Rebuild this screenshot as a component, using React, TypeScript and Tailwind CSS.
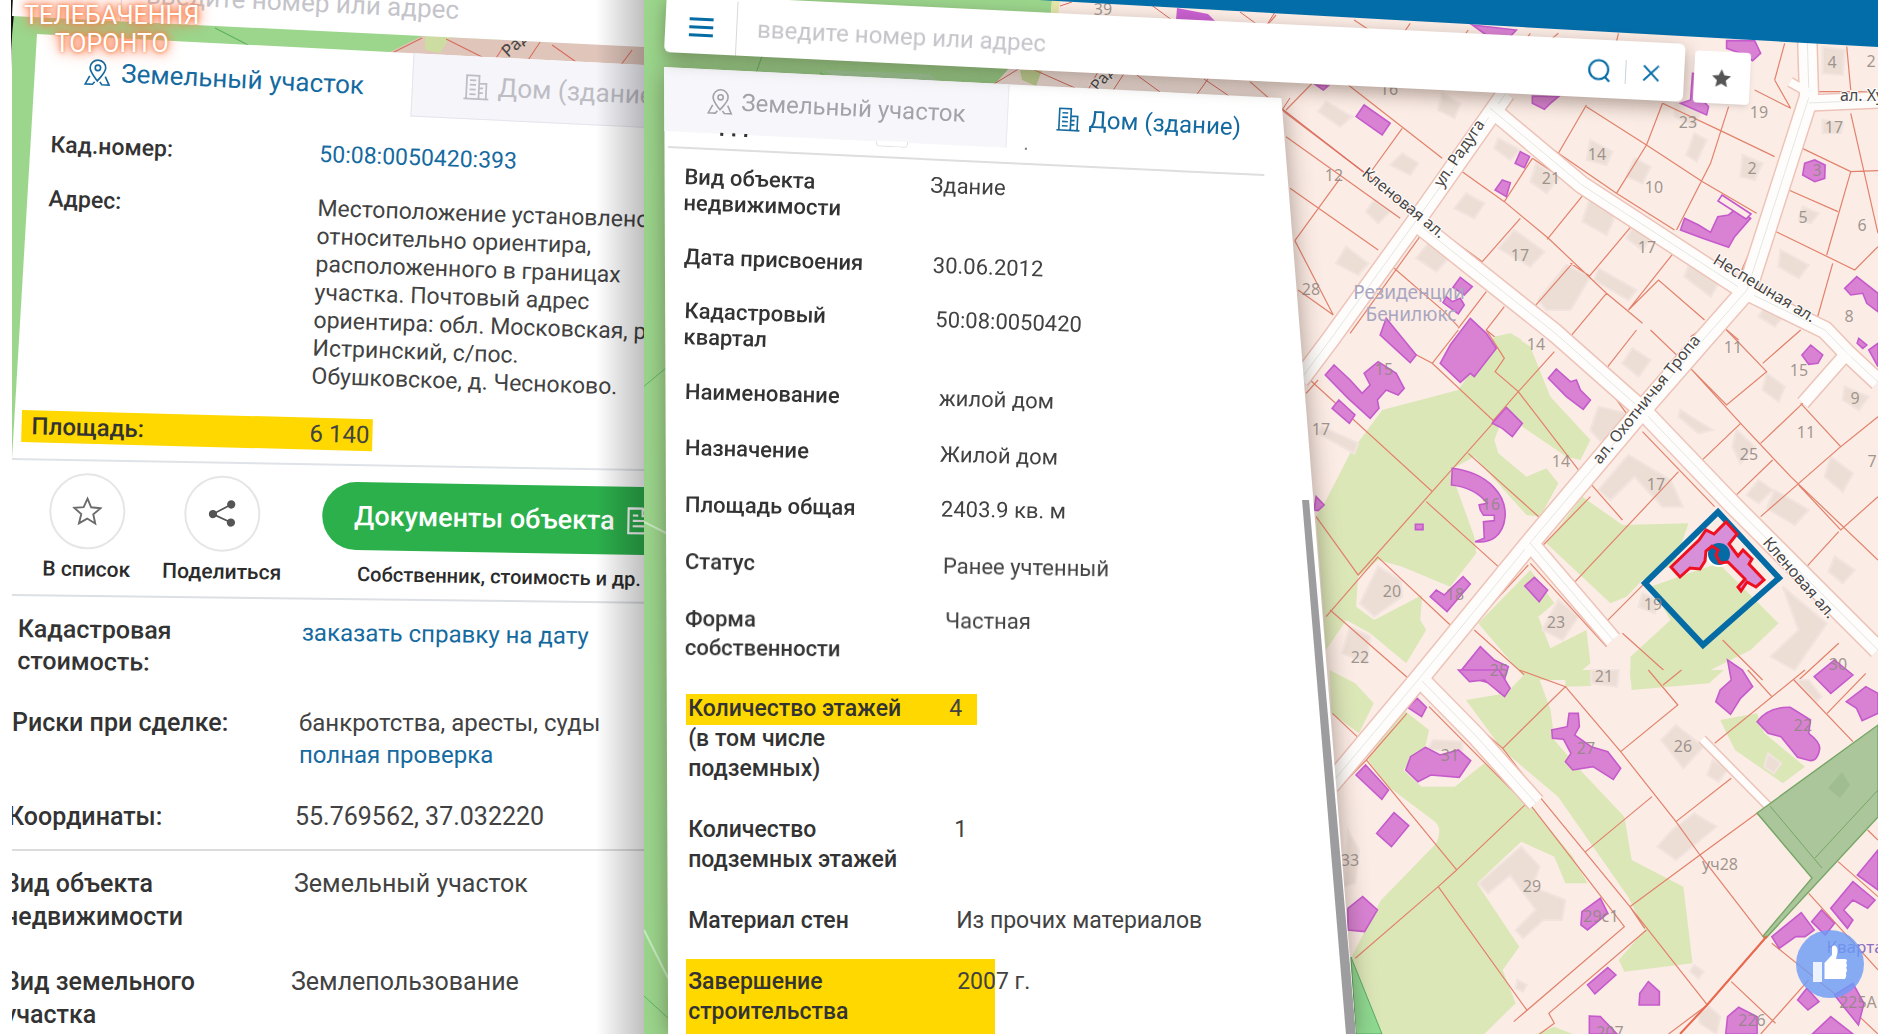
import type { ReactNode } from 'react';

type Label = { x: number; y: number; text: string; rotate?: number };

const ROADS = [
  { d: 'M1506 93L1426 207L1330 340L1300 380', w: 17 },
  { d: 'M1422 227L1555 333L1642 410L1731 503L1878 650', w: 17 },
  { d: 'M1490 108L1582 185L1743 290L1825 330L1847 353L1878 382', w: 16 },
  { d: 'M1807 30L1809 97L1747 290L1703 340L1642 410L1530 543L1418 680L1330 785', w: 18 },
  { d: 'M1809 103L1878 100', w: 15 },
  { d: 'M1790 82L1815 96', w: 8 },
  { d: 'M1530 543L1613 640', w: 16 },
  { d: 'M1847 353L1803 403', w: 12 },
  { d: 'M1422 681L1477 737L1536 803', w: 17 },
  { d: 'M1702 739L1768 806', w: 7 },
];

const LABELS: Label[] = [
  { x: 1103, y: 15, text: '39' },
  { x: 1334, y: 181, text: '12' },
  { x: 1389, y: 95, text: '16' },
  { x: 1311, y: 295, text: '28' },
  { x: 1520, y: 261, text: '17' },
  { x: 1551, y: 184, text: '21' },
  { x: 1597, y: 160, text: '14' },
  { x: 1654, y: 193, text: '10' },
  { x: 1647, y: 253, text: '17' },
  { x: 1688, y: 128, text: '23' },
  { x: 1759, y: 118, text: '19' },
  { x: 1752, y: 174, text: '2' },
  { x: 1832, y: 68, text: '4' },
  { x: 1871, y: 67, text: '2' },
  { x: 1834, y: 133, text: '17' },
  { x: 1817, y: 176, text: '3' },
  { x: 1803, y: 223, text: '5' },
  { x: 1862, y: 231, text: '6' },
  { x: 1849, y: 322, text: '8' },
  { x: 1536, y: 350, text: '14' },
  { x: 1733, y: 353, text: '11' },
  { x: 1384, y: 375, text: '15' },
  { x: 1799, y: 376, text: '15' },
  { x: 1855, y: 404, text: '9' },
  { x: 1321, y: 435, text: '17' },
  { x: 1806, y: 438, text: '11' },
  { x: 1749, y: 460, text: '25' },
  { x: 1561, y: 467, text: '14' },
  { x: 1872, y: 467, text: '7' },
  { x: 1656, y: 490, text: '17' },
  { x: 1491, y: 510, text: '16' },
  { x: 1392, y: 597, text: '20' },
  { x: 1455, y: 600, text: '18' },
  { x: 1653, y: 610, text: '19' },
  { x: 1556, y: 628, text: '23' },
  { x: 1360, y: 663, text: '22' },
  { x: 1499, y: 676, text: '25' },
  { x: 1604, y: 682, text: '21' },
  { x: 1838, y: 670, text: '30' },
  { x: 1803, y: 731, text: '22' },
  { x: 1683, y: 752, text: '26' },
  { x: 1586, y: 754, text: '27' },
  { x: 1450, y: 761, text: '31' },
  { x: 1350, y: 866, text: '33' },
  { x: 1720, y: 870, text: 'уч28' },
  { x: 1532, y: 892, text: '29' },
  { x: 1601, y: 922, text: '29с1' },
  { x: 1752, y: 1026, text: '226' },
  { x: 1858, y: 1008, text: '225А' },
  { x: 1610, y: 1038, text: '207' },
];

const STREETS: Label[] = [
  { x: 1442, y: 188, text: 'ул. Радуга', rotate: -56 },
  { x: 1361, y: 175, text: 'Кленовая ал.', rotate: 39 },
  { x: 1712, y: 263, text: 'Неспешная ал.', rotate: 31 },
  { x: 1600, y: 465, text: 'ал. Охотничья Тропа', rotate: -51 },
  { x: 1762, y: 543, text: 'Кленовая ал.', rotate: 49 },
  { x: 1840, y: 101, text: 'ал. Ху', rotate: 0 },
  { x: 1098, y: 92, text: 'Радуга', rotate: -50 },
];

const NORTH_LINES =
  'M0 245L90 340L420 640M90 410L230 530L375 655M100 565L320 750M112 722L208 945M112 722L225 535M120 870L208 945M155 250L90 330M240 250L480 475M380 385L305 510M360 805L485 935L520 980M450 635L600 380M530 515L635 605L745 715L890 880L980 970M635 605L705 475M705 475L835 580L955 675L1205 860M835 580L742 718M955 675L848 828L800 790M675 655L580 785M805 790L712 918M890 880L800 1010M580 785L425 650M600 320L770 460L915 580L1060 690M840 315L770 460M840 320L990 435L1130 545L1265 640M990 435L915 580M1030 310L990 435M1030 310L1180 395L1310 470M1195 320L1150 490L1065 690M1350 325L1260 270M1310 240L1350 325M1335 130L1310 240M1370 440L1500 515L1568 512M1500 515L1440 765M1335 565L1468 635M1305 690L1510 810L1568 740M1455 790L1415 960M1500 340L1568 700M1395 345L1210 860M1390 135L1405 275L1568 275M1490 140L1500 270M1060 755L945 930L1020 840L1135 960M1245 890L1100 1010M1185 985L1220 1020M590 875L520 985M635 920L590 990L620 1020M430 700L250 1000M260 60L310 100M400 70L380 105M545 90L530 115M700 100L685 125M770 100L745 125M920 100L912 140M65 45L40 80M420 700L800 1015';
const MIDDLE_LINES =
  'M150 150L455 485L270 735L165 560M170 150L140 190M345 30L455 100L610 275L455 485M455 100L520 0M590 0L635 85L612 125L670 185L605 275M760 65L670 185L820 420L930 570M545 370L725 565M440 515L620 710M318 680L500 885M190 860L320 680M200 840L400 1050M800 20L940 250M890 115L965 0M1000 0L1100 115L1225 280L1350 440L1568 690M1225 280L1125 395M1100 115L1190 225L1290 125L1190 0M1280 100L1375 0M1375 220L1475 350L1568 260M1475 350L1275 560M1275 340L1380 220M1305 390L1210 500M1370 465L1475 600L1568 500M1470 605L1390 710M980 305L1160 530M1070 425L800 770M720 660L850 500M700 700L890 950M695 705L560 880M560 900L690 1040M930 910L1060 1050M890 875L985 760M1180 930L1280 1050M1470 940L1370 1050M1550 945L1568 930';
const SOUTH_LINES =
  'M88 130L155 200M350 40L550 235L720 50L595 0M550 235L650 380L895 710L1105 1005M720 50L870 245L1020 455L1085 555L1260 805M870 245L1025 105L945 0M985 45L1035 0M1125 220L1370 0M1215 0L1280 80M1340 30L1500 215M1430 130L1535 10M1170 325L1020 455M1085 555L895 710M1240 430L1085 555M775 545L955 380M180 270L425 600L615 400L570 355L350 110M375 650L615 1020M150 865L375 650L425 600M625 405L880 770L580 1055M940 780L675 1030L690 1060L650 1092M935 775L895 710M180 270L290 130M100 360L180 270M1105 1005L1420 605L1568 430M1000 1092L1105 1005M1460 575L1568 680M1380 670L1568 900M1280 820L1460 980L1568 1092M1170 935L1290 1060M1380 930L1250 1092M1540 480L1568 510';

const NORTH_BUILDINGS =
  'M285 315L350 370L330 405L265 350ZM675 455L698 470L685 503L662 490ZM630 540L650 548L640 590L612 570ZM1085 655L1120 675L1150 697L1168 650L1195 645L1215 625L1250 655L1210 710L1195 742L1130 715L1075 690ZM1385 490L1410 480L1436 495L1435 535L1410 545L1380 525ZM1515 830L1568 880L1568 935L1540 910L1530 880L1500 885L1485 865ZM705 288L770 290L750 310L735 328L705 310ZM1105 220L1125 225L1122 290L1145 320L1140 345L1075 310L1100 300ZM555 75L665 90L640 122L590 105ZM1190 122L1260 122L1275 160L1255 182L1225 160L1190 145ZM525 832L555 860L535 885L507 862ZM490 890L505 905L525 895L535 915L520 942L482 908ZM165 255L195 258L183 270Z';
const MIDDLE_BUILDINGS =
  'M210 105L250 150L280 190L300 165L285 130L320 95L365 130L385 175L370 195L340 180L318 210L322 235L300 265L245 205L188 135ZM222 210L262 255L248 280L205 235ZM340 -35L415 75L400 98L325 15ZM550 -35L590 10L615 55L560 140L550 130L525 157L475 100L500 45ZM765 117L800 155L815 150L825 180L850 210L832 238L790 200L745 145ZM640 232L680 280L655 320L630 295L605 280ZM505 415C600 430 640 500 637 560C632 620 600 640 562 635L585 625L583 575L610 572L610 556L583 556L575 540L572 525L592 520C570 485 540 470 503 465ZM165 500L185 525L170 542L160 540ZM413 583H432V599H413ZM532 740L550 762L492 845L450 800L465 780L485 795ZM710 742L743 780L722 815L686 768ZM1400 45L1430 75L1418 100L1395 103L1378 75ZM1545 60L1568 40V110ZM575 950L610 990L645 1010L635 1050L625 1090L600 1060L555 1045L525 1025ZM1520 25L1540 45L1530 55L1516 40Z';
const SOUTH_BUILDINGS =
  'M430 0L540 0L570 55L555 80L500 30L460 35ZM318 85L343 112L330 140L292 112ZM340 232L380 255L430 240L463 272L432 322L355 315L320 335L287 300L300 260ZM178 285L240 360L222 388L152 315ZM255 428L295 467L248 530L208 490ZM170 680L210 720L175 785L130 780L130 715ZM730 130L755 130L758 170L745 195L790 230L835 245L870 295L850 328L795 290L740 300L720 275L735 250L715 208L685 205L683 180L725 170ZM1160 -30L1200 0L1228 50L1195 85L1168 133L1128 95L1140 60L1170 30ZM1450 -30L1500 15L1440 70L1395 20ZM1535 50L1568 70L1568 130L1525 152L1510 115L1482 95ZM1240 155Q1270 110 1330 112L1385 150L1380 190Q1410 215 1410 235Q1405 272 1385 272L1350 262L1305 200L1270 190ZM1568 540L1568 660L1512 615ZM1500 635L1560 690L1540 715L1500 690L1475 720L1500 750L1485 775L1440 715ZM1360 728L1395 780L1370 800L1345 800L1300 835L1280 800ZM1415 720L1450 760L1425 795L1388 755ZM815 685L835 730L780 780L762 765L765 725ZM835 893L857 915L800 972L780 945ZM945 935L975 965L975 1005L920 1005L922 970ZM785 1038L815 1040L860 1092L785 1092ZM1190 1012L1240 1040L1240 1092L1155 1092L1160 1040ZM1375 955L1408 995L1378 1020L1350 990ZM1450 975L1500 940L1530 1000L1515 1065L1475 1010ZM1440 1040L1500 1092L1390 1092Z';

const NORTH_HOUSES =
  'M190 305L255 350L225 380L170 335ZM480 280L525 310L510 355L470 330ZM380 460L420 490L400 525L350 495ZM620 415L675 450L650 480L610 445ZM540 580L585 610L560 655L510 625ZM310 600L350 635L320 670L290 635ZM240 740L295 790L270 825L215 790ZM445 730L500 770L465 815L415 775ZM660 690L735 755L700 800L620 745ZM715 490L770 535L740 580L700 545ZM850 590L915 640L890 705L830 665ZM790 795L850 830L800 930L740 930L720 900ZM960 475L1000 500L980 550L940 530ZM850 420L905 455L890 495L840 480ZM970 650L1010 700L980 750L940 715ZM1060 300L1130 330L1110 380L1060 350ZM1110 400L1140 420L1115 485L1090 465ZM1230 465L1280 490L1260 540L1225 530ZM1430 140L1485 150L1480 225L1430 220ZM1430 360L1480 370L1475 400L1430 400ZM1380 620L1420 640L1400 670L1370 660ZM1325 750L1395 795L1370 835L1320 800ZM1290 910L1340 940L1310 980L1270 950ZM1100 780L1180 830L1150 890L1085 830ZM870 805L965 870L945 900L860 840Z';
const MIDDLE_HOUSES =
  'M955 55L1000 90L970 140L930 100ZM870 230L940 250L880 340L850 300ZM945 375L1050 450L1080 530L1030 530L960 440L900 510L870 480ZM1075 240L1155 300L1120 310L1070 260ZM1290 130L1335 170L1320 215L1280 180ZM1450 380L1505 430L1480 485L1435 440ZM1215 300L1260 350L1225 400L1205 350ZM1310 480L1395 540L1360 585L1290 535ZM1270 450L1305 480L1270 520L1240 495ZM1330 770L1440 880L1360 1020L1300 980L1370 900ZM1460 680L1510 720L1480 760L1445 725ZM770 810L820 860L780 930L730 900ZM320 710L375 750L380 800L310 860L275 820ZM250 890L300 920L290 1000L230 970ZM180 290L270 340L260 370L170 310ZM1485 170L1545 200L1520 240L1480 210ZM980 790L1020 810L1010 850L970 830Z';
const SOUTH_HOUSES =
  'M600 530L650 590L630 650L720 690L710 750L660 750L605 805L585 780L640 720L570 615L510 670L485 640ZM1020 165L1095 230L1040 295L980 210ZM1070 430L1130 470L1020 570L970 530L1010 480ZM130 480L160 540L150 640L120 650ZM360 210L440 215L440 240L345 240ZM790 0H865L860 50L790 40ZM1120 270L1160 300L1135 335L1105 315ZM1080 1030L1110 1010L1140 1040L1130 1092L1085 1060ZM590 930L615 945L605 965L585 955ZM1070 885L1095 905L1080 925L1058 905ZM1345 30L1380 30L1415 80L1400 95ZM1270 250L1305 280L1285 310L1260 290Z';

function MapTile({ transform, houses, lines, buildings, green }: {
  transform: string;
  houses: string;
  lines: string;
  buildings: string;
  green: string;
}) {
  return (
    <g transform={transform}>
      <path d={green} fill="#dce7b8" />
      <path d={houses} fill="#ecddd5" stroke="#f1e4de" strokeWidth="6" />
      <path d={lines} fill="none" stroke="#e2826c" strokeWidth="1.2" vectorEffect="non-scaling-stroke" />
      <path d={buildings} fill="#d982d4" stroke="#c55bcb" strokeWidth="1.6" vectorEffect="non-scaling-stroke" />
    </g>
  );
}

function CadastreMap() {
  return (
    <svg
      viewBox="644 0 1234 1034"
      preserveAspectRatio="xMinYMin slice"
      className="absolute inset-0 h-full w-full"
      fontFamily='"Noto Sans", "Open Sans", sans-serif'
      aria-label="Кадастровая карта"
    >
      <path d="M640 0H1878V1034H640Z" fill="#fbece5" />
      <path d="M640 0H1052L1050 22L995 84L1000 88L700 1034H640Z" fill="#9bd68c" />
      <path d="M825 70L930 74L960 100L850 90Z" fill="#a5d5a0" />
      <path d="M1052 0H1060L1056 30H1050Z" fill="#e5e8a8" />
      <path d="M1020 70H1042L1036 86L1022 80Z" fill="#c5dc98" />
      <path d="M762 56L750 90M820 73L860 98M642 388L666 368M644 996L668 1018" stroke="#62b266" fill="none" />
      <path d="M644 522L668 534M644 930L668 978" stroke="#c5ecc0" strokeWidth="2" fill="none" />
      <path d="M1020 68L994 84M1030 68L1075 88M1100 68L1088 90M1125 72L1112 92M1130 70L1160 92M1208 79L1190 104M1204 79L1232 98M1290 98L1278 116M1060 6L1072 2M1150 4L1180 26M1240 12L1262 28M1275 12L1265 28" stroke="#d96a5c" fill="none" />
      <path d="M1177 8L1208 14L1218 24L1200 28L1176 20Z" fill="#c85fd0" />

      <MapTile
        transform="translate(1250 0) scale(.4005 .3333)"
        green="M620 1020L650 1000L680 1020Z"
        houses={NORTH_HOUSES}
        lines={NORTH_LINES}
        buildings={NORTH_BUILDINGS}
      />
      <path d="M1722 195L1751 214L1746 219L1718 201Z" fill="#fcece5" stroke="#c55bcb" strokeWidth="1.6" />
      <MapTile
        transform="translate(1250 330) scale(.4005 .3333)"
        green="M330 240L520 180L610 20L650 10L700 50L750 200L850 330L825 390L790 380L680 290L640 235L610 330L620 370L690 440L740 415L770 460L725 560L690 555L560 380L500 420L515 470L560 620L565 670L500 770L380 710L320 690L270 740L265 830L310 870L430 795L425 870L440 900L390 1000L300 910L240 870L190 960L165 560L190 510L250 370ZM830 500L930 585L1095 580L1060 700L980 750L940 800L900 820L740 640ZM700 720L760 820L720 860L750 955L840 900L850 1000L800 1050L690 1050L570 880ZM1170 700L1320 880L1250 960L1100 1050H950V980L1050 870L1000 770L1070 740Z"
        houses={MIDDLE_HOUSES}
        lines={MIDDLE_LINES}
        buildings={MIDDLE_BUILDINGS}
      />
      <MapTile
        transform="translate(1300 670) scale(.3686 .3333)"
        green="M80 0L150 40L200 100L160 190L85 130ZM270 110L350 180L340 230L280 300L330 350L420 350L500 280L620 400L740 560L780 640H720L690 560L600 515L480 640L595 830L550 900L585 1000L500 1092H220L140 860L220 690L370 520Q390 470 360 450L240 350L185 270ZM450 90L560 70L620 0H640L680 120L690 210L760 300L880 440L900 570L1040 650L1065 880L880 905L865 870L935 780L890 680L700 380L550 240ZM720 0H790V48L720 50ZM895 0H1150L1110 40L900 60ZM1140 150L1240 130L1260 190L1370 290L1310 340L1180 240ZM690 1070L740 1092H640Z"
        houses={SOUTH_HOUSES}
        lines={SOUTH_LINES}
        buildings={SOUTH_BUILDINGS}
      />

      {ROADS.map((road) => (
        <path key={road.d} d={road.d} fill="none" stroke="#edc3b8" strokeWidth={road.w + 3} />
      ))}
      {ROADS.map((road) => (
        <g key={road.d} fill="none" strokeLinejoin="round">
          <path d={road.d} stroke="#fefdfb" strokeWidth={road.w} />
          {road.w > 12 && <path d={road.d} stroke="#e3e7e4" strokeWidth="1" />}
        </g>
      ))}
      <path d="M1281 108L1420 216" stroke="#dd6f62" strokeWidth="1.2" />

      {/* nature strip east of plot 28 */}
      <path d="M1878 725V817L1766 938L1763 936L1812 878L1757 813Z" fill="#abc69b" stroke="#76a665" strokeWidth="1.4" />
      <path d="M1770 806L1822 868M1878 790L1815 858" stroke="#76a665" fill="none" />
      <path d="M1842 772L1850 785L1840 798L1828 788Z" fill="#9fbd90" />
      <path d="M1351 957L1382 1034H1356Z" fill="#8fdb92" stroke="#58ab62" />
      <path d="M1680 1034L1707 1005L1767 936" stroke="#e8694e" strokeWidth="2" fill="none" />

      {/* selected plot and building */}
      <path d="M1718 512L1779 578L1703 645L1645 583Z" fill="none" stroke="#056ba5" strokeWidth="6" />
      <circle cx="1719" cy="554" r="13" fill="#fff" />
      <path
        d="M1671 567L1699 540L1706 530L1714 534L1726 522L1737 534L1729 544L1738 556L1743 550L1752 559L1749 564L1764 580L1756 587L1747 582L1741 591L1738 587L1745 579L1724 560L1712 548L1706 551L1705 561L1700 569L1690 568L1680 577Z"
        fill="#d78fd8"
      />
      <circle cx="1719" cy="554" r="11" fill="#056ba5" />
      <path
        d="M1671 567L1699 540L1706 530L1714 534L1726 522L1737 534L1729 544L1738 556L1743 550L1752 559L1749 564L1764 580L1756 587L1747 582L1741 591L1738 587L1745 579L1728 562L1720 563L1716 555L1718 550L1712 546L1706 551L1705 561L1700 569L1690 568L1680 577Z"
        fill="none"
        stroke="#ee1020"
        strokeWidth="3"
      />

      <g fontSize="16" fill="#8f8680" fillOpacity=".85" textAnchor="middle">
        {LABELS.map((l) => (
          <text key={`${l.x}-${l.y}`} x={l.x} y={l.y}>{l.text}</text>
        ))}
      </g>
      <g fontSize="16" fill="#4a4644" stroke="#fff" strokeWidth="2" paintOrder="stroke">
        {STREETS.map((s) => (
          <text key={`${s.x}-${s.y}`} transform={`translate(${s.x} ${s.y}) rotate(${s.rotate})`}>{s.text}</text>
        ))}
      </g>
      <g fontSize="19" fill="#a9a5c0" textAnchor="middle">
        <text x="1409" y="299">Резиденции</text>
        <text x="1411" y="321">Бенилюкс</text>
        <text x="1860" y="953" fontSize="17" fill="#8c6fc4">Квартал</text>
      </g>
    </svg>
  );
}

function PlotIcon({ className }: { className: string }) {
  return (
    <svg viewBox="0 0 26 26" fill="none" stroke="currentColor" strokeWidth="1.6" className={className} aria-hidden="true">
      <path d="M13 21C9 16 5.500 12.500 5.500 8.500a7.500 7.500 0 0 1 15 0C20.500 12.500 17 16 13 21Z" />
      <circle cx="13" cy="8.500" r="2.600" />
      <path d="M5.500 16.500L1.500 24.500H8.500L10.500 22M15.500 22L17.500 24.500H24.500L20.500 16.500" />
    </svg>
  );
}

function HouseIcon({ className }: { className: string }) {
  return (
    <svg viewBox="0 0 26 26" fill="none" stroke="currentColor" strokeWidth="1.700" className={className} aria-hidden="true">
      <path d="M1 24.500H25M3.500 24V2H15.500V24M15.500 9.500H22.500V24M6.500 6.500H12.500M6.500 11H12.500M6.500 15.500H12.500M6.500 20H12.500M15.500 14H19.500M15.500 18.500H19.500" />
    </svg>
  );
}

function Row({ label, className = '', labelClass, children }: {
  label: ReactNode;
  className?: string;
  labelClass: string;
  children: ReactNode;
}) {
  return (
    <div className={`flex origin-left whitespace-nowrap ${className}`}>
      <dt className={`shrink-0 font-medium text-[#333] ${labelClass}`}>{label}</dt>
      <dd className="text-[#424242]">{children}</dd>
    </div>
  );
}

function PlotView() {
  return (
    <section className="relative flex h-full w-[34.3%] shrink-0 flex-col overflow-hidden bg-[#9bd68c] pl-3">
      <svg className="absolute inset-0 h-full w-full" viewBox="0 0 644 1034" preserveAspectRatio="xMinYMin slice" aria-hidden="true">
        <path d="M0 0H12V1034H0Z" fill="#fff" />
        <path d="M16 0Q11 30 11 70V0Z" fill="#111" />
        <path d="M390 52L422 36L644 46V90H390Z" fill="#dfc5ba" />
        <path d="M425 35L450 37L440 53L425 50Z" fill="#cddca0" />
        <path d="M390 54L422 38M446 39L484 58M505 44L496 58M540 42L528 60M552 45L576 62M632 50L620 66" stroke="#d96a5c" fill="none" />
        <path d="M215 28L248 45" stroke="#5daf5f" />
        <text transform="translate(508 58) rotate(-42)" fontSize="17" fontFamily="Noto Sans" fill="#4a4644">Рад</text>
      </svg>

      <div className="relative z-10 -mt-10 flex h-14 w-[110%] shrink-0 origin-bottom-left rotate-[2.8deg] items-center bg-white pl-14">
        <button aria-label="Меню" className="flex w-[52px] flex-col gap-1.5 pb-3">
          <span className="h-[3px] w-6 bg-[#056ba5]" />
          <span className="h-[3px] w-6 bg-[#056ba5]" />
          <span className="h-[3px] w-6 bg-[#056ba5]" />
        </button>
        <input
          aria-label="Поиск участка"
          placeholder="введите номер или адрес"
          className="h-full flex-1 border-l border-[#dcdce2] pl-6 text-[26px] outline-none placeholder:text-[#c4c4ca]"
        />
      </div>

      <div className="relative mt-[18px] flex-1 bg-white [clip-path:polygon(25px_0,100%_31px,100%_100%,0_100%,0_425px)]">
        <div role="tablist" className="ml-6 flex h-16 w-[110%] origin-top-left rotate-[2.8deg]">
          <button role="tab" aria-selected="true" className="flex w-[378px] shrink-0 items-center gap-2.5 pt-1.5 pl-[50px] text-[26px] text-[#156a9f]">
            <PlotIcon className="size-[27px]" />
            Земельный участок
          </button>
          <button role="tab" aria-selected="false" className="flex flex-1 items-center gap-2 border-b border-l border-[#e4e4ec] bg-[#f5f5fa] pl-[50px] text-[26px] whitespace-nowrap text-[#bdbdc4]">
            <HouseIcon className="size-[27px]" />
            Дом (здание)
          </button>
        </div>

        <dl className="mt-8 flex origin-top-left rotate-2 flex-col gap-[26px] pl-[39px] text-[23px] leading-7">
          <Row label="Кад.номер:" labelClass="w-[269px]">
            <a href="#plot" className="text-[#156a9f]">50:08:0050420:393</a>
          </Row>
          <Row label="Адрес:" labelClass="w-[269px]">
            Местоположение установлено<br />
            относительно ориентира,<br />
            расположенного в границах<br />
            участка. Почтовый адрес<br />
            ориентира: обл. Московская, р<br />
            Истринский, с/пос.<br />
            Обушковское, д. Чесноково.
          </Row>
        </dl>
        <dl className="mt-[30px] ml-2.5 w-[351px] origin-top-left rotate-[1.5deg] bg-[#ffd800] pl-2.5 text-2xl leading-8">
          <Row label="Площадь:" labelClass="w-[278px]">6 140</Row>
        </dl>

        <hr className="mt-4 w-[110%] origin-left rotate-1 border-t-2 border-[#dfe3e8]" />

        <div className="mt-3 flex origin-top-left rotate-1 items-start gap-8 pl-8 text-[21px] leading-6 font-medium whitespace-nowrap text-[#2b2b2b]">
          <button className="flex w-[104px] flex-col items-center gap-2">
            <span className="flex size-[76px] items-center justify-center rounded-full border-2 border-[#e6e6e8]">
              <svg viewBox="0 0 24 24" className="size-[30px]" fill="none" stroke="#6b6b6b" strokeWidth="1.500" aria-hidden="true">
                <path d="M12 1.800L15 8.700L22.500 9.400L16.800 14.300L18.500 21.700L12 17.800L5.500 21.700L7.200 14.300L1.500 9.400L9 8.700Z" />
              </svg>
            </span>
            В список
          </button>
          <button className="flex w-[126px] flex-col items-center gap-2">
            <span className="flex size-[76px] items-center justify-center rounded-full border-2 border-[#e6e6e8]">
              <svg viewBox="0 0 24 24" className="size-7" fill="#555" stroke="#555" strokeWidth="1.500" aria-hidden="true">
                <path d="M19.500 4L4 12.500L19.500 19.500" fill="none" />
                <circle cx="19.500" cy="4" r="2.800" />
                <circle cx="4" cy="12.500" r="2.800" />
                <circle cx="19.500" cy="19.500" r="2.800" />
              </svg>
            </span>
            Поделиться
          </button>
          <div className="ml-2 flex flex-1 flex-col gap-3 pt-1">
            <button className="flex h-[68px] w-[400px] items-center gap-2.5 rounded-full bg-[#2cb04c] pl-8 text-[27px] text-white">
              Документы объекта
              <svg viewBox="0 0 24 26" className="size-7" fill="none" stroke="currentColor" strokeWidth="2" aria-hidden="true">
                <path d="M2 1.500H15L22 8.500V24.500H2ZM15 1.500V8.500H22M6 8H11M6 13H18M6 18H18" />
              </svg>
            </button>
            <span className="pl-9 text-xl leading-6">Собственник, стоимость и др.</span>
          </div>
        </div>

        <hr className="mt-3.5 w-[110%] origin-left rotate-[0.7deg] border-t-2 border-[#dcdfe3]" />

        <dl className="mt-[17px] origin-top-left rotate-[0.7deg] pl-1.5 text-2xl leading-8">
          <Row label={<>Кадастровая<br />стоимость:</>} labelClass="w-[284px] text-[25px]">
            <a href="#report" className="text-[#156a9f]">заказать справку на дату</a>
          </Row>
        </dl>
        <dl className="mt-[30px] flex flex-col gap-[30px] text-2xl leading-8">
          <Row label="Риски при сделке:" labelClass="w-[287px] text-[25px]">
            банкротства, аресты, суды<br />
            <a href="#check" className="text-[#156a9f]">полная проверка</a>
          </Row>
          <Row className="text-[25px]" label="Координаты:" labelClass="-ml-1 w-[287px]">55.769562, 37.032220</Row>
        </dl>

        <hr className="mt-4 border-t-2 border-[#dcdcdc]" />

        <dl className="mt-4 -ml-2 flex flex-col gap-8 text-[25px] leading-[33px]">
          <Row label={<>Вид объекта<br />недвижимости</>} labelClass="w-[290px]">Земельный участок</Row>
          <Row label={<>Вид земельного<br />участка</>} labelClass="w-[287px]">Землепользование</Row>
        </dl>
      </div>

      <div className="pointer-events-none absolute inset-y-0 right-0 z-20 w-12 bg-gradient-to-l from-black/25 to-transparent" />
    </section>
  );
}

function BuildingView() {
  return (
    <section className="relative flex min-w-0 flex-1 flex-col overflow-hidden pl-5">
      <CadastreMap />
      <div className="absolute top-0 right-0 h-[47px] w-[68%] bg-[#036da9] [clip-path:polygon(0_0,100%_0,100%_100%)]" />

      <div className="relative z-10 -mt-1.5 flex h-[58px] shrink-0 origin-bottom-left rotate-[2.8deg] gap-2.5">
        <div className="flex w-[84%] items-center rounded-md bg-white pt-1 shadow-[0_6px_18px_rgba(60,40,30,0.4)]">
          <button aria-label="Меню" className="flex w-[71px] flex-col items-center gap-[5px]">
            <span className="h-[3px] w-6 bg-[#056ba5]" />
            <span className="h-[3px] w-6 bg-[#056ba5]" />
            <span className="h-[3px] w-6 bg-[#056ba5]" />
          </button>
          <input
            aria-label="Поиск здания"
            placeholder="введите номер или адрес"
            className="h-full min-w-0 flex-1 border-l border-[#d8d8dc] pl-5 text-2xl outline-none placeholder:text-[#c4c4ca]"
          />
          <button aria-label="Найти" className="px-3.5 text-[#056ba5]">
            <svg viewBox="0 0 24 24" className="size-6" fill="none" stroke="currentColor" strokeWidth="2.200" aria-hidden="true">
              <circle cx="11.500" cy="11" r="9.500" />
              <path d="M18 18L22.500 22.500" />
            </svg>
          </button>
          <span className="h-6 w-px bg-[#c9d3dc]" />
          <button aria-label="Очистить" className="pr-6 pl-4 text-[#056ba5]">
            <svg viewBox="0 0 18 18" className="size-[18px]" fill="none" stroke="currentColor" strokeWidth="1.800" aria-hidden="true">
              <path d="M1.500 1.500L16.500 16.500M16.500 1.500L1.500 16.500" />
            </svg>
          </button>
        </div>
        <button aria-label="Избранное" className="mt-1.5 flex h-[52px] w-14 items-center justify-center rounded bg-white shadow-md">
          <svg viewBox="0 0 24 24" className="size-[19px]" fill="#555" aria-hidden="true">
            <path d="M12 .5L15.500 8.300L24 9.200L17.600 14.900L19.400 23.200L12 18.900L4.600 23.200L6.400 14.900L0 9.200L8.500 8.300Z" />
          </svg>
        </button>
      </div>

      <div className="relative mt-[15px] w-[57%] flex-1 drop-shadow-[0_2px_12px_rgba(60,40,30,0.45)]">
        <div className="relative h-full bg-white pl-5 [clip-path:polygon(0_0,89.200%_31px,100%_100%,4px_100%)]">
          <div role="tablist" className="-ml-5 flex h-16 w-[110%] origin-top-left rotate-[2.8deg]">
            <button role="tab" aria-selected="false" className="flex w-[346px] items-center gap-2 border-r border-[#e9e9ef] bg-[#f7f7fb] pl-[45px] text-2xl whitespace-nowrap text-[#a2a2a8]">
              <PlotIcon className="size-[26px]" />
              Земельный участок
            </button>
            <button role="tab" aria-selected="true" className="flex items-center gap-2 pl-12 text-2xl text-[#156a9f]">
              <HouseIcon className="size-[25px]" />
              Дом (здание)
            </button>
          </div>

          {/* tail of the row scrolled under the tabs */}
          <div className="flex h-[15px] origin-left rotate-[2.8deg] items-start gap-[9px] pl-9">
            <span className="size-[3px] bg-[#333]" />
            <span className="size-[3px] bg-[#333]" />
            <span className="size-[3px] bg-[#333]" />
            <span className="ml-[120px] h-1.5 w-8 rounded-b border border-t-0 border-[#e2e2e6] bg-white" />
            <span className="ml-[108px] size-[2px] bg-[#777]" />
          </div>
          <hr className="-ml-4 w-[597px] origin-left rotate-[2.7deg] border-t-2 border-[#dedede]" />

          <dl className="mt-4 flex flex-col gap-7 text-[22px] leading-[26px]">
            <Row className="rotate-2" label={<>Вид объекта<br />недвижимости</>} labelClass="w-[246px]">Здание</Row>
            <Row className="rotate-2" label="Дата присвоения" labelClass="w-[249px]">30.06.2012</Row>
            <Row className="rotate-2" label={<>Кадастровый<br />квартал</>} labelClass="w-[251px]">50:08:0050420</Row>
          </dl>
          <dl className="mt-7 flex flex-col gap-7 pl-px text-[22px] leading-7">
            <Row className="rotate-[1.5deg]" label="Наименование" labelClass="w-[254px]">жилой дом</Row>
            <Row className="rotate-[1.5deg]" label="Назначение" labelClass="w-[255px]">Жилой дом</Row>
          </dl>
          <dl className="mt-7 flex flex-col gap-7 pl-px text-[22px] leading-[29px]">
            <Row className="rotate-1" label="Площадь общая" labelClass="w-[256px]">2403.9 кв. м</Row>
            <Row className="rotate-1" label="Статус" labelClass="w-[258px]">Ранее учтенный</Row>
            <Row className="rotate-[0.5deg]" label={<>Форма<br />собственности</>} labelClass="w-[260px]">Частная</Row>
          </dl>
          <dl className="mt-8 flex flex-col gap-[31px] pl-0.5 text-[23px] leading-[30px]">
            <Row
              className="w-[291px] bg-[linear-gradient(#ffd800,#ffd800)] bg-[length:100%_31px] bg-no-repeat pl-0.5"
              label={<>Количество этажей<br />(в том числе<br />подземных)</>}
              labelClass="w-[261px]"
            >
              4
            </Row>
            <Row className="pl-0.5" label={<>Количество<br />подземных этажей</>} labelClass="w-[266px]">1</Row>
            <Row className="pl-0.5" label="Материал стен" labelClass="w-[268px]">Из прочих материалов</Row>
            <Row
              className="-mt-2 w-[309px] bg-[#ffd800] pt-2 pb-2 pl-0.5"
              label={<>Завершение<br />строительства</>}
              labelClass="w-[269px]"
            >
              2007 г.
            </Row>
          </dl>

          <div className="absolute right-0 bottom-0 h-[535px] w-[54px] bg-[#9d9d9f] [clip-path:polygon(0_0,7px_0,100%_100%,44px_100%)]" />
        </div>
      </div>
    </section>
  );
}

export default function App() {
  return (
    <main className="relative flex h-screen overflow-hidden bg-white font-[Roboto,sans-serif]">
      <PlotView />
      <BuildingView />
      <div className="absolute top-0.5 left-6 z-30 text-center text-[25px] leading-7 text-white [text-shadow:0_0_3px_#f58a50,0_0_6px_#f57a40,0_0_12px_#ff7a50,0_0_18px_#ff8a70]">
        ТЕЛЕБАЧЕННЯ<br />
        ТОРОНТО
      </div>
      <button
        aria-label="Нравится"
        className="absolute right-3.5 bottom-9 z-30 flex size-[68px] items-center justify-center rounded-full bg-[#6a9bf6]/80"
      >
        <svg viewBox="0 0 36 38" className="h-[38px] w-9" fill="#fff" aria-hidden="true">
          <path d="M1 17H10V37H1Z" fillOpacity=".85" />
          <path d="M12.500 34V18L20 10V2Q20 .5 22 .5Q26 1 25.500 7L24 14H33Q35 14 35 16L34 18Q36 20 34 23Q36 25 34 28Q35 31 33 34Z" />
        </svg>
      </button>
    </main>
  );
}
